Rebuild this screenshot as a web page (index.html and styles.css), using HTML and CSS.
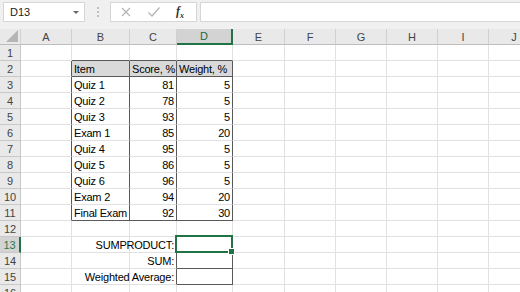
FILE: index.html
```html
<!DOCTYPE html>
<html lang="en">
<head>
  <meta charset="UTF-8">
  <title>Weighted Average</title>
  <link rel="stylesheet" href="styles.css">
</head>
<body>
  <div class="toolbar">
    <div class="namebox">
      <span>D13</span>
      <span class="drop"></span>
    </div>
    <div class="dots"><i></i><i></i><i></i></div>
    <div class="fxbox">
      <svg width="12" height="12" viewBox="0 0 12 12"><path d="M2 2 L10 10 M10 2 L2 10" stroke="#b3b3b3" stroke-width="1.2" fill="none"/></svg>
      <svg width="14" height="12" viewBox="0 0 14 12"><path d="M1.5 6.5 L5 10 L12.5 1.5" stroke="#b3b3b3" stroke-width="1.2" fill="none"/></svg>
      <span class="fx">f<sub>x</sub></span>
    </div>
    <div class="formula"></div>
  </div>

  <div class="sheet">
    <table>
      <colgroup>
        <col style="width:21px"><col style="width:51px"><col style="width:58px"><col style="width:47px"><col style="width:56px">
        <col style="width:52px"><col style="width:51px"><col style="width:51px"><col style="width:51px"><col style="width:51px"><col style="width:51px">
      </colgroup>
      <tr class="colhead">
        <th class="corner"><span class="tri"></span></th>
        <th>A</th><th>B</th><th>C</th><th class="sel">D</th><th>E</th><th>F</th><th>G</th><th>H</th><th>I</th><th>J</th>
      </tr>
      <tr>
        <th>1</th><td></td><td class="bb"></td><td class="bb"></td><td class="bb"></td><td></td><td></td><td></td><td></td><td></td><td></td>
      </tr>
      <tr>
        <th>2</th><td class="br"></td><td class="hd br bb">Item</td><td class="hd br bb">Score, %</td><td class="hd br bb">Weight, %</td><td></td><td></td><td></td><td></td><td></td><td></td>
      </tr>
      <tr>
        <th>3</th><td class="br"></td><td class="br">Quiz 1</td><td class="br num">81</td><td class="br num">5</td><td></td><td></td><td></td><td></td><td></td><td></td>
      </tr>
      <tr>
        <th>4</th><td class="br"></td><td class="br">Quiz 2</td><td class="br num">78</td><td class="br num">5</td><td></td><td></td><td></td><td></td><td></td><td></td>
      </tr>
      <tr>
        <th>5</th><td class="br"></td><td class="br">Quiz 3</td><td class="br num">93</td><td class="br num">5</td><td></td><td></td><td></td><td></td><td></td><td></td>
      </tr>
      <tr>
        <th>6</th><td class="br"></td><td class="br">Exam 1</td><td class="br num">85</td><td class="br num">20</td><td></td><td></td><td></td><td></td><td></td><td></td>
      </tr>
      <tr>
        <th>7</th><td class="br"></td><td class="br">Quiz 4</td><td class="br num">95</td><td class="br num">5</td><td></td><td></td><td></td><td></td><td></td><td></td>
      </tr>
      <tr>
        <th>8</th><td class="br"></td><td class="br">Quiz 5</td><td class="br num">86</td><td class="br num">5</td><td></td><td></td><td></td><td></td><td></td><td></td>
      </tr>
      <tr>
        <th>9</th><td class="br"></td><td class="br">Quiz 6</td><td class="br num">96</td><td class="br num">5</td><td></td><td></td><td></td><td></td><td></td><td></td>
      </tr>
      <tr>
        <th>10</th><td class="br"></td><td class="br">Exam 2</td><td class="br num">94</td><td class="br num">20</td><td></td><td></td><td></td><td></td><td></td><td></td>
      </tr>
      <tr>
        <th>11</th><td class="br"></td><td class="br bb">Final Exam</td><td class="br bb num">92</td><td class="br bb num">30</td><td></td><td></td><td></td><td></td><td></td><td></td>
      </tr>
      <tr>
        <th>12</th><td></td><td></td><td></td><td></td><td></td><td></td><td></td><td></td><td></td><td></td>
      </tr>
      <tr>
        <th class="sel">13</th><td></td><td></td><td class="br label"><span>SUMPRODUCT:</span></td><td class="br bb active"></td><td></td><td></td><td></td><td></td><td></td><td></td>
      </tr>
      <tr>
        <th>14</th><td></td><td></td><td class="br label"><span>SUM:</span></td><td class="br bb"></td><td></td><td></td><td></td><td></td><td></td><td></td>
      </tr>
      <tr>
        <th>15</th><td></td><td></td><td class="br label"><span>Weighted Average:</span></td><td class="br bb"></td><td></td><td></td><td></td><td></td><td></td><td></td>
      </tr>
      <tr>
        <th>16</th><td></td><td></td><td></td><td></td><td></td><td></td><td></td><td></td><td></td><td></td>
      </tr>
    </table>
  </div>
</body>
</html>
```

FILE: styles.css
```css
body {
  margin: 0;
  background: #ffffff;
  font-family: 'Liberation Sans', Arial, sans-serif;
  font-size: 11px;
  color: #000;
  overflow: hidden;
}

.toolbar {
  display: flex;
  align-items: center;
  height: 29px;
  padding: 0 0 5px 3px;
  box-sizing: border-box;
  background: #f0f0f0;
}

.namebox, .fxbox, .formula {
  height: 20px;
  box-sizing: border-box;
  background: #fff;
  border: 1px solid #d6d6d6;
}

.namebox {
  width: 82px;
  display: flex;
  align-items: center;
  justify-content: space-between;
  padding: 0 5px 0 6px;
  color: #222;
}

.drop {
  width: 0;
  height: 0;
  border-left: 3px solid transparent;
  border-right: 3px solid transparent;
  border-top: 3px solid #666;
}

.dots {
  width: 25px;
  display: flex;
  flex-direction: column;
  align-items: center;
  gap: 2px;
}

.dots i {
  width: 2px;
  height: 2px;
  background: #c0c0c0;
}

.fxbox {
  width: 87px;
  display: flex;
  align-items: center;
  gap: 15px;
  padding-left: 9px;
}

.fx {
  font-family: 'Liberation Serif', serif;
  font-style: italic;
  font-weight: bold;
  font-size: 12px;
  color: #333;
}

.fx sub {
  font-size: 8px;
}

.formula {
  flex: 1;
  margin-left: 3px;
  border-right: none;
}

.sheet {
  border-left: 1px solid #6b6b6b;
}

table {
  table-layout: fixed;
  border-collapse: separate;
  border-spacing: 0;
  width: 540px;
  margin-left: -1px;
}

th, td {
  height: 16px;
  padding: 1px 2px 0;
  line-height: 14px;
  border-right: 1px solid #e1e1e1;
  border-bottom: 1px solid #e1e1e1;
  white-space: nowrap;
  overflow: visible;
  font-weight: normal;
  text-align: left;
  box-sizing: border-box;
}

td {
  letter-spacing: -0.2px;
}

tr {
  height: 16px;
}

th {
  background: #e9e9e9;
  color: #444;
  text-align: center;
  border-right-color: #c8c8c8;
  border-bottom-color: #c8c8c8;
}

.colhead {
  height: 15px;
}

.colhead th {
  height: 15px;
  padding-top: 0;
  border-right-color: #d0d0d0;
  border-bottom-color: #bdbdbd;
}

.colhead th.sel {
  background: #d3d3d3;
  color: #1e6b3f;
  border-bottom: 2px solid #217346;
}

th.sel {
  background: #d3d3d3;
  color: #2a7a4e;
  border-right: 2px solid #217346;
}

.corner {
  position: relative;
}

.tri {
  position: absolute;
  right: 2px;
  bottom: 2px;
  width: 0;
  height: 0;
  border-left: 12px solid transparent;
  border-bottom: 12px solid #b5b5b5;
}

.br {
  border-right-color: #595959;
}

.bb {
  border-bottom-color: #595959;
}

.hd {
  background: #d9d9d9;
}

.num {
  text-align: right;
}

.label {
  position: relative;
}

.label span {
  position: absolute;
  right: 2px;
  top: 1px;
}

.active {
  position: relative;
}

.active::after {
  content: "";
  position: absolute;
  left: -2px;
  top: -2px;
  right: -1px;
  bottom: -1px;
  border: 2px solid #217346;
}

.active::before {
  content: "";
  position: absolute;
  right: -3px;
  bottom: -3px;
  width: 5px;
  height: 5px;
  background: #217346;
  border: 1px solid #fff;
  z-index: 1;
}
```
